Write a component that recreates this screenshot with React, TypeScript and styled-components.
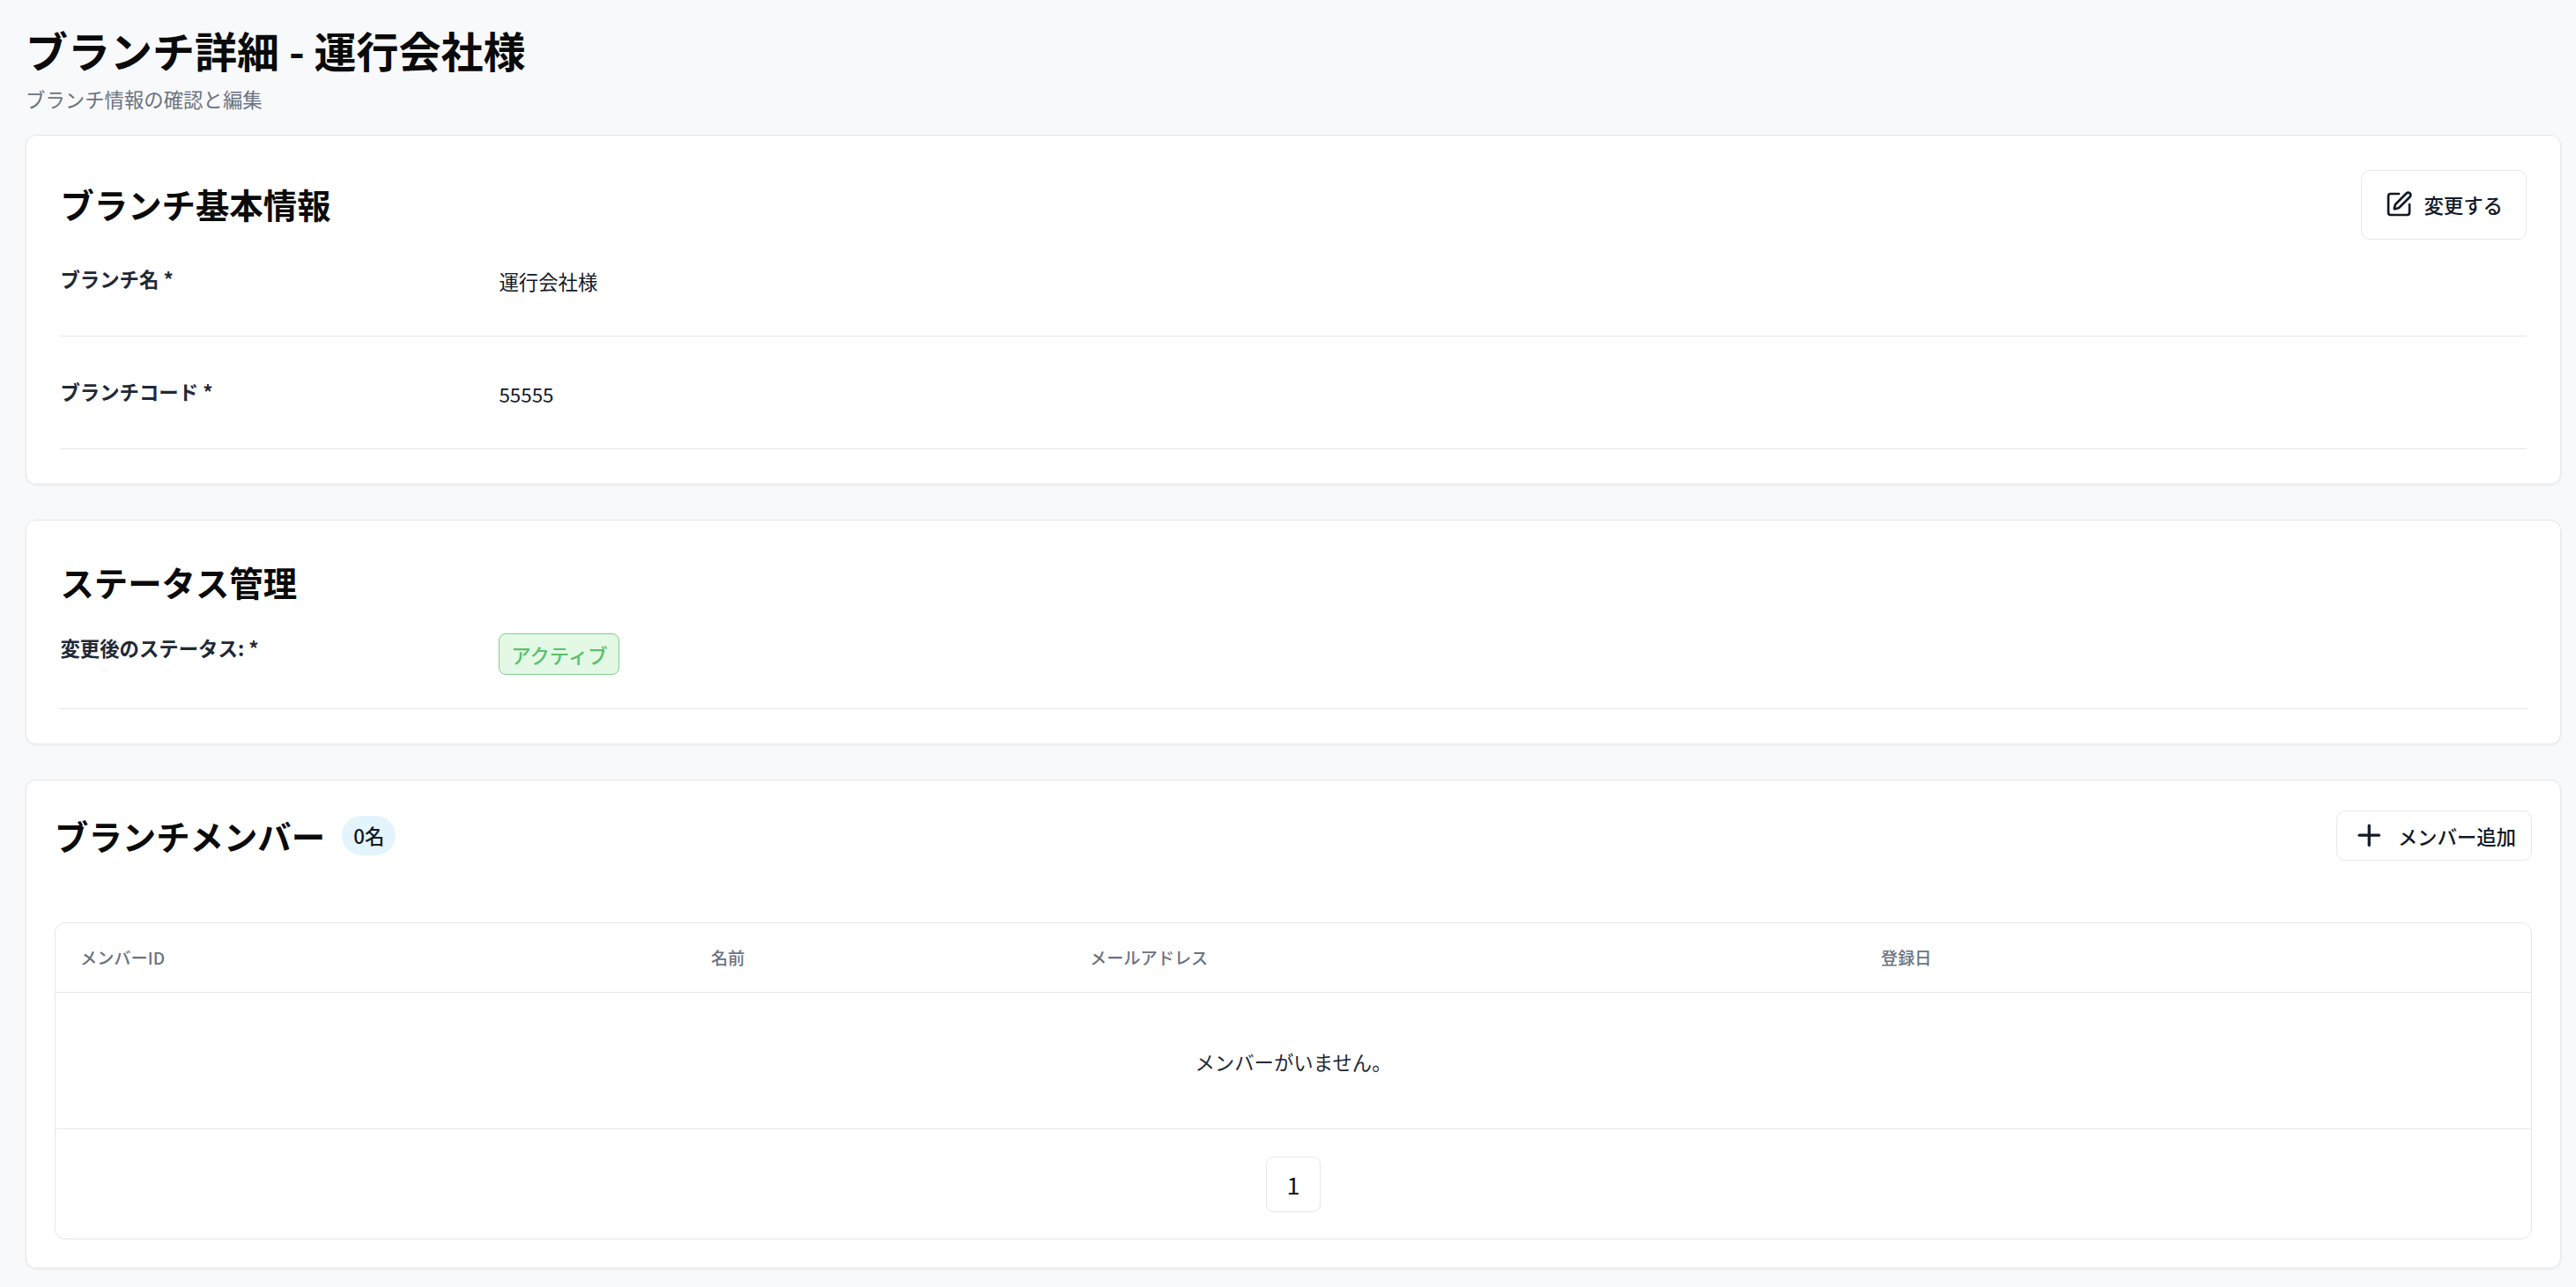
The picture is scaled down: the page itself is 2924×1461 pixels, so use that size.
import React from "react";
import styled, { createGlobalStyle } from "styled-components";
import { SquarePen, Plus } from "lucide-react";

const GlobalStyle = createGlobalStyle`
  html, body { margin: 0; padding: 0; }
  body {
    background: #f8f9fb;
    font-family: "Noto Sans CJK JP", "Noto Sans", "Liberation Sans", sans-serif;
    color: #111827;
  }
  * { box-sizing: border-box; }
`;

const Page = styled.main`
  display: flex;
  flex-direction: column;
  padding: 28px 17px 19px 29px;
`;

const PageHeader = styled.header`
  margin-bottom: 25.6px;
`;

const Title = styled.h1`
  margin: 0;
  font-size: 48px;
  line-height: 57.6px;
  font-weight: 700;
  color: #0a0a0a;
`;

const Subtitle = styled.p`
  margin: 10px 0 0;
  font-size: 22.4px;
  line-height: 32px;
  color: #6b7280;
`;

const Stack = styled.div`
  display: flex;
  flex-direction: column;
  gap: 40px;
`;

const Card = styled.section<{ $pad: string }>`
  background: #ffffff;
  border: 1.6px solid #e7e8eb;
  border-radius: 12px;
  box-shadow: 0 1px 3px rgba(16, 24, 40, 0.06);
  padding: ${(p) => p.$pad};
`;

const CardHeader = styled.div<{ $minH: number; $mb: number }>`
  display: flex;
  align-items: center;
  justify-content: space-between;
  min-height: ${(p) => p.$minH}px;
  margin-bottom: ${(p) => p.$mb}px;
`;

const TitleGroup = styled.div`
  display: flex;
  align-items: center;
`;

const CardTitle = styled.h2`
  margin: 0;
  font-size: 38.4px;
  line-height: 51.2px;
  font-weight: 700;
  color: #0a0a0a;
`;

const CountPill = styled.span`
  margin-left: 19.2px;
  padding: 6.4px 12.8px;
  border-radius: 9999px;
  background: #e4f4fd;
  font-size: 22.4px;
  line-height: 32px;
  font-weight: 500;
  color: #111827;
`;

const OutlineButton = styled.button<{ $h: number; $px: number }>`
  display: inline-flex;
  align-items: center;
  gap: 12.8px;
  height: ${(p) => p.$h}px;
  padding: 0 ${(p) => p.$px}px;
  background: #ffffff;
  border: 1.6px solid #e5e7eb;
  border-radius: 10px;
  font-family: inherit;
  font-size: 22.4px;
  line-height: 32px;
  font-weight: 500;
  color: #111827;
  cursor: pointer;
  svg { flex-shrink: 0; color: #111827; }
`;

const FieldList = styled.div`
  display: flex;
  flex-direction: column;
  gap: 46px;
`;

const Field = styled.div`
  display: grid;
  grid-template-columns: 498px 1fr;
  align-items: start;
  padding-bottom: 38.4px;
  border-bottom: 1.6px solid #e5e7eb;
`;

const FieldLabel = styled.div`
  font-size: 22.4px;
  line-height: 32px;
  font-weight: 700;
  color: #1f2937;
`;

const FieldValue = styled.div`
  min-height: 43px;
  font-size: 22.4px;
  line-height: 38.4px;
  color: #111827;
`;

const StatusBadge = styled.span`
  display: inline-flex;
  align-items: center;
  padding: 6.4px 12.8px;
  border: 1.6px solid #80d08d;
  border-radius: 8px;
  background: #e3f9e6;
  color: #5cbf6a;
  font-size: 22.4px;
  line-height: 32px;
  font-weight: 500;
`;

const TableFrame = styled.div`
  border: 1.6px solid #e5e7eb;
  border-radius: 12px;
  overflow: hidden;
  background: #ffffff;
`;

const Table = styled.table`
  width: 100%;
  border-collapse: separate;
  border-spacing: 0;
  table-layout: fixed;
`;

const Th = styled.th<{ $w?: number }>`
  ${(p) => (p.$w ? `width: ${p.$w}px;` : "")}
  padding: 25px 0 24.8px 28px;
  text-align: left;
  font-size: 19.2px;
  line-height: 28px;
  font-weight: 500;
  color: #6b7280;
  border-bottom: 1.6px solid #e5e7eb;
`;

const EmptyCell = styled.td`
  padding: 62.4px 0 59.6px;
  text-align: center;
  font-size: 22.4px;
  line-height: 32px;
  color: #1f2937;
  border-bottom: 1.6px solid #e5e7eb;
`;

const Pager = styled.div`
  display: flex;
  align-items: center;
  justify-content: center;
  height: 124.4px;
`;

const PageButton = styled.button`
  width: 62px;
  height: 63px;
  display: inline-flex;
  align-items: center;
  justify-content: center;
  background: #ffffff;
  border: 1.6px solid #e5e7eb;
  border-radius: 8px;
  font-family: inherit;
  font-size: 27px;
  line-height: 1;
  color: #111111;
  cursor: pointer;
`;

export default function App() {
  return (
    <>
      <GlobalStyle />
      <Page>
        <PageHeader>
          <Title>ブランチ詳細 - 運行会社様</Title>
          <Subtitle>ブランチ情報の確認と編集</Subtitle>
        </PageHeader>
        <Stack>
          <Card $pad="38.4px">
            <CardHeader $minH={60} $mb={28}>
              <CardTitle>ブランチ基本情報</CardTitle>
              <OutlineButton $h={79} $px={25.6}>
                <SquarePen size={32} strokeWidth={2} />
                変更する
              </OutlineButton>
            </CardHeader>
            <FieldList>
              <Field>
                <FieldLabel>ブランチ名 *</FieldLabel>
                <FieldValue>運行会社様</FieldValue>
              </Field>
              <Field>
                <FieldLabel>ブランチコード *</FieldLabel>
                <FieldValue>55555</FieldValue>
              </Field>
            </FieldList>
          </Card>

          <Card $pad="38.4px">
            <CardHeader $minH={62} $mb={28}>
              <CardTitle>ステータス管理</CardTitle>
            </CardHeader>
            <FieldList>
              <Field>
                <FieldLabel>変更後のステータス: *</FieldLabel>
                <FieldValue>
                  <StatusBadge>アクティブ</StatusBadge>
                </FieldValue>
              </Field>
            </FieldList>
          </Card>

          <Card $pad="34px 32px 32px">
            <CardHeader $minH={57.6} $mb={70}>
              <TitleGroup>
                <CardTitle>ブランチメンバー</CardTitle>
                <CountPill>0名</CountPill>
              </TitleGroup>
              <OutlineButton $h={57.6} $px={17}>
                <Plus size={38.4} strokeWidth={2} />
                メンバー追加
              </OutlineButton>
            </CardHeader>
            <TableFrame>
              <Table>
                <thead>
                  <tr>
                    <Th $w={716}>メンバーID</Th>
                    <Th $w={430}>名前</Th>
                    <Th $w={898}>メールアドレス</Th>
                    <Th>登録日</Th>
                  </tr>
                </thead>
                <tbody>
                  <tr>
                    <EmptyCell colSpan={4}>メンバーがいません。</EmptyCell>
                  </tr>
                </tbody>
              </Table>
              <Pager>
                <PageButton>1</PageButton>
              </Pager>
            </TableFrame>
          </Card>
        </Stack>
      </Page>
    </>
  );
}
